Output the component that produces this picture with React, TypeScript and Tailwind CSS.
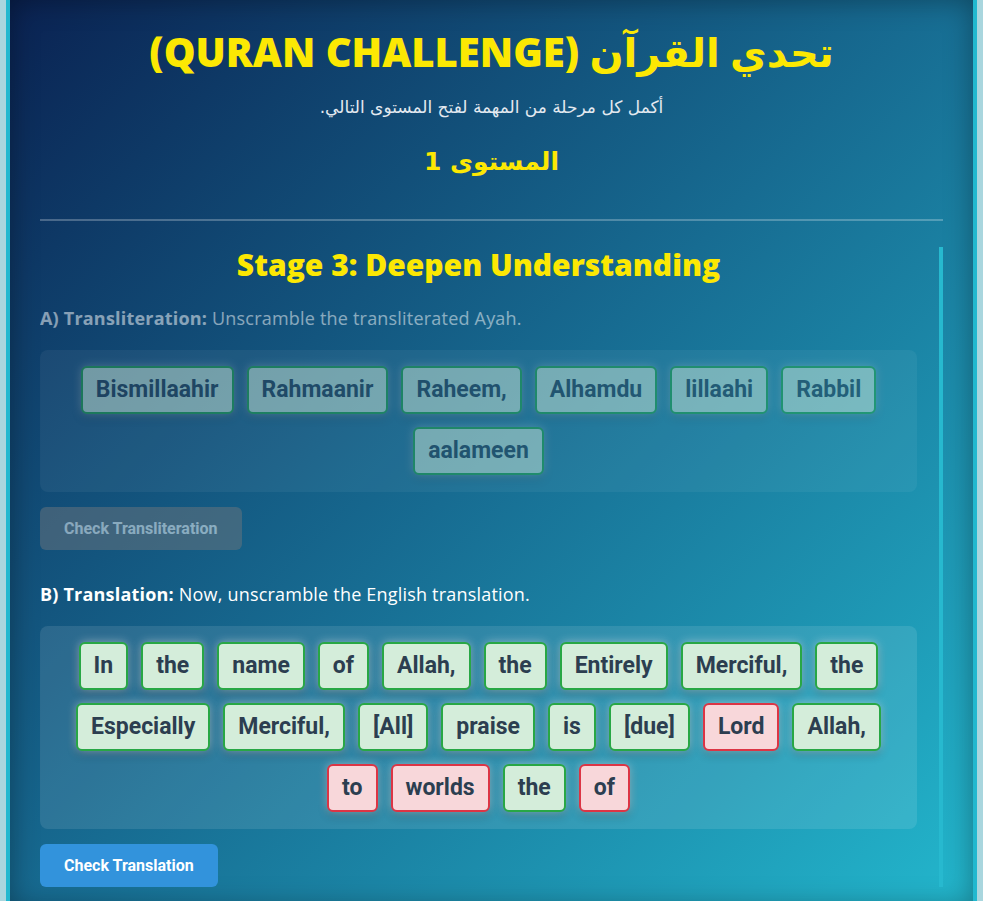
import React from "react";

type Chip = { text: string; wrong?: boolean };

const transliteration: Chip[] = [
  { text: "Bismillaahir" },
  { text: "Rahmaanir" },
  { text: "Raheem," },
  { text: "Alhamdu" },
  { text: "lillaahi" },
  { text: "Rabbil" },
  { text: "aalameen" },
];

const translation: Chip[] = [
  { text: "In" },
  { text: "the" },
  { text: "name" },
  { text: "of" },
  { text: "Allah," },
  { text: "the" },
  { text: "Entirely" },
  { text: "Merciful," },
  { text: "the" },
  { text: "Especially" },
  { text: "Merciful," },
  { text: "[All]" },
  { text: "praise" },
  { text: "is" },
  { text: "[due]" },
  { text: "Lord", wrong: true },
  { text: "Allah," },
  { text: "to", wrong: true },
  { text: "worlds", wrong: true },
  { text: "the" },
  { text: "of", wrong: true },
];

/**
 * A single scrambled word tile
 */
function WordChip({ chip }: { chip: Chip }) {
  return (
    <span
      className={`rounded-md border-2 px-[13px] py-[8px] text-[23px] leading-[28px] font-bold text-[#2c3e50] shadow-[0_0_10px_rgba(255,255,255,0.45),0_4px_8px_rgba(0,0,0,0.25)] ${
        chip.wrong
          ? "border-[#dc3545] bg-[#f8d7da]"
          : "border-[#28a745] bg-[#d4edda]"
      }`}
      style={{ fontFamily: "Roboto, 'Liberation Sans', sans-serif" }}
    >
      {chip.text}
    </span>
  );
}

function WordBox({ chips }: { chips: Chip[] }) {
  return (
    <div className="flex flex-wrap justify-center gap-x-[13px] gap-y-[13px] rounded-lg bg-white/10 px-[36px] pt-[16px] pb-[17px]">
      {chips.map((c, i) => (
        <WordChip key={i} chip={c} />
      ))}
    </div>
  );
}

export default function App() {
  const roboto = { fontFamily: "Roboto, 'Liberation Sans', sans-serif" };
  const poppins = { fontFamily: "'Open Sans', 'Liberation Sans', sans-serif" };
  const heading = { fontFamily: "'Open Sans', 'DejaVu Sans', sans-serif" };

  return (
    <div className="min-h-screen bg-[#a9d6de] px-[6px]">
      <div className="min-h-screen border-x-4 border-[#22b8cf] bg-[linear-gradient(135deg,#0a2252_0%,#176c92_50%,#23b7cd_100%)] px-[30px] pt-[26px] pb-[20px] shadow-[inset_0_0_28px_rgba(0,0,0,0.35)]">
        {/* header */}
        <div dir="rtl" className="text-center">
          <h1
            className="text-[40px] leading-[52px] font-extrabold text-[#fce803]"
            style={heading}
          >
            تحدي القرآن (QURAN CHALLENGE)
          </h1>
          <p
            className="mt-[17px] text-[17px] leading-[24px] text-[#e3e9f0]"
            style={{ fontFamily: "'DejaVu Sans', sans-serif" }}
          >
            أكمل كل مرحلة من المهمة لفتح المستوى التالي.
          </p>
          <h2
            className="mt-[26px] text-[25px] leading-[34px] font-bold text-[#fce803]"
            style={{ fontFamily: "'DejaVu Sans', sans-serif" }}
          >
            المستوى 1
          </h2>
        </div>

        <div className="mt-[40px] h-[2px] bg-white/25" />

        {/* stage */}
        <div className="mt-[26px] border-r-4 border-[#27b9cf] pr-[22px]">
          <h3
            className="text-center text-[30px] leading-[36px] font-extrabold text-[#fce803]"
            style={heading}
          >
            Stage 3: Deepen Understanding
          </h3>

          <div className="opacity-50">
            <p
              className="mt-[22px] text-[18px] leading-[26px] tracking-[0.2px] text-white"
              style={poppins}
            >
              <span className="font-bold">A) Transliteration:</span> Unscramble
              the transliterated Ayah.
            </p>
            <div className="mt-[19px]">
              <WordBox chips={transliteration} />
            </div>
            <button
              className="mt-[15px] rounded-md bg-[#6c757d] px-[24px] py-[12px] text-[16px] leading-[19px] font-bold text-white"
              style={roboto}
            >
              Check Transliteration
            </button>
          </div>

          <p
            className="mt-[31px] text-[18px] leading-[26px] tracking-[0.2px] text-white"
            style={poppins}
          >
            <span className="font-bold">B) Translation:</span> Now, unscramble
            the English translation.
          </p>
          <div className="mt-[19px]">
            <WordBox chips={translation} />
          </div>
          <button
            className="mt-[15px] rounded-md bg-[#3293dc] px-[24px] py-[12px] text-[16px] leading-[19px] font-bold text-white"
            style={roboto}
          >
            Check Translation
          </button>
        </div>
      </div>
    </div>
  );
}
